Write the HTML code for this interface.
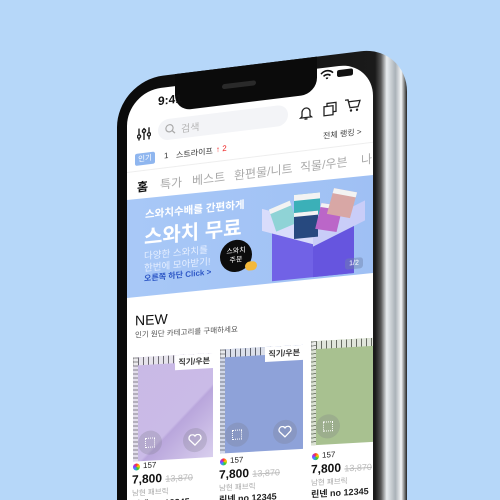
<!DOCTYPE html>
<html><head><meta charset="utf-8">
<style>
*{margin:0;padding:0;box-sizing:border-box}
html,body{width:500px;height:500px;overflow:hidden}
body{background:#b6d7f9;font-family:"Liberation Sans","Noto Sans CJK KR",sans-serif}
#wrap{position:relative;width:500px;height:500px;overflow:hidden;background:#b6d7f9}
.sec{position:absolute;left:0;top:0;width:500px;height:500px;transform-origin:127px 0}
.a{position:absolute;white-space:nowrap}
.frame{position:absolute;left:117px;top:80px;width:290px;height:640px;border-radius:46px;background:linear-gradient(90deg,#0a0a0a 0,#1a1a1a 89%,#555 91%,#e8ecef 93%,#aab2b8 96%,#f4f6f7 98%,#222 100%)}
.screen{position:absolute;left:127px;top:92px;width:246px;height:640px;border-radius:34px 34px 0 0;background:#fff}
.card{position:absolute;width:80px;height:104px;overflow:hidden}
.ruler{position:absolute;left:0;top:0;right:0;height:8px;background:repeating-linear-gradient(90deg,#555 0 1px,#eee 1px 5px);opacity:.8}
.rl{position:absolute;left:0;top:0;bottom:0;width:5px;background:repeating-linear-gradient(180deg,#666 0 1px,#eee 1px 4px);opacity:.7}
.tag{position:absolute;right:0;top:0;background:#fff;font-size:8px;font-weight:bold;padding:2px 3px;color:#333}
.ic{position:absolute;width:24px;height:24px;border-radius:12px;background:rgba(120,120,130,.25)}
.sq{position:absolute;left:7px;top:7px;width:10px;height:10px;border:1.5px dotted #fff}
</style></head><body><div id="wrap">

<div class="sec" style="transform:skewY(-7deg)">
  <div class="frame"></div>
  <div class="screen"></div>
  <div class="a" style="left:175px;top:80px;width:142px;height:37px;background:#0b0b0b;border-radius:0 0 16px 16px"></div>
  <div class="a" style="left:222px;top:96px;width:34px;height:5px;background:#2a2a2a;border-radius:3px"></div>
  <div class="a" style="left:158px;top:98px;font-size:12px;font-weight:bold;color:#111">9:41</div>
  <svg class="a" style="left:320px;top:94px" width="14" height="11" viewBox="0 0 14 11"><path d="M1 4 A8 8 0 0 1 13 4 M3.5 6.5 A5 5 0 0 1 10.5 6.5 M6 9 A2 2 0 0 1 8 9" stroke="#111" stroke-width="1.6" fill="none"/></svg>
  <div class="a" style="left:337px;top:96px;width:16px;height:7px;background:#111;border-radius:2px"></div>
  <svg class="a" style="left:137px;top:129px" width="14" height="14" viewBox="0 0 14 14"><g stroke="#222" stroke-width="1.4" fill="none"><path d="M2 1v12M7 1v12M12 1v12"/><circle cx="2" cy="9" r="1.6" fill="#fff"/><circle cx="7" cy="4" r="1.6" fill="#fff"/><circle cx="12" cy="8" r="1.6" fill="#fff"/></g></svg>
  <div class="a" style="left:158px;top:124px;width:130px;height:21px;border-radius:11px;background:#f3f4f7"></div>
  <svg class="a" style="left:165px;top:129px" width="11" height="11" viewBox="0 0 11 11"><circle cx="4.5" cy="4.5" r="3.6" stroke="#aaa" stroke-width="1.2" fill="none"/><path d="M7.2 7.2L10 10" stroke="#aaa" stroke-width="1.2"/></svg>
  <div class="a" style="left:181px;top:127px;font-size:10px;color:#b5b5b5">검색</div>
  <svg class="a" style="left:298px;top:127px" width="16" height="16" viewBox="0 0 16 16"><path d="M4 11V7a4 4 0 0 1 8 0v4l1.5 1.5h-11zM6.5 14h3" stroke="#222" stroke-width="1.3" fill="none"/></svg>
  <svg class="a" style="left:322px;top:126px" width="16" height="16" viewBox="0 0 16 16"><rect x="2" y="5" width="9" height="9" stroke="#222" stroke-width="1.3" fill="none"/><path d="M5 5V2h9v9h-3" stroke="#222" stroke-width="1.3" fill="none"/></svg>
  <svg class="a" style="left:344px;top:125px" width="17" height="16" viewBox="0 0 17 16"><path d="M1 2h3l2 8h8l2-6H5" stroke="#222" stroke-width="1.3" fill="none"/><circle cx="7" cy="13" r="1.2" fill="#222"/><circle cx="13" cy="13" r="1.2" fill="#222"/></svg>
  <div class="a" style="left:135px;top:155px;width:20px;height:12px;background:#8fb6ef;border-radius:2px;color:#fff;font-size:7.5px;text-align:center;line-height:12px">인기</div>
  <div class="a" style="left:164px;top:156px;font-size:8px;color:#333">1</div>
  <div class="a" style="left:176px;top:156px;font-size:8px;color:#333">스트라이프</div>
  <div class="a" style="left:216px;top:156px;font-size:8px;color:#e22">↑ 2</div>
  <div class="a" style="left:323px;top:155px;font-size:8px;color:#444">전체 랭킹 &gt;</div>
  <div class="a" style="left:127px;top:172px;width:246px;height:1px;background:#eee"></div>
  <div class="a" style="left:137px;top:180px;font-size:12px;font-weight:bold;color:#111">홈</div>
  <div class="a" style="left:160px;top:180px;font-size:12px;color:#aaa">특가</div>
  <div class="a" style="left:192px;top:180px;font-size:12px;color:#aaa">베스트</div>
  <div class="a" style="left:234px;top:180px;font-size:12px;color:#aaa">환편물/니트</div>
  <div class="a" style="left:300px;top:180px;font-size:12px;color:#aaa">직물/우븐</div>
  <div class="a" style="left:361px;top:180px;font-size:12px;color:#aaa">나</div>
</div>

<div class="sec" style="transform:skewY(-5.8deg)">
  <div class="a" style="left:127px;top:200px;width:246px;height:98px;background:linear-gradient(90deg,#a8c8f7,#9fc0f4)"></div>
  <div class="a" style="left:145px;top:209px;font-size:10.5px;color:#fff;font-weight:bold">스와치수배를 간편하게</div>
  <div class="a" style="left:144px;top:223px;font-size:20px;color:#fff;font-weight:bold">스와치 무료</div>
  <div class="a" style="left:144px;top:250px;font-size:9.5px;color:#e6efff">다양한 스와치를</div>
  <div class="a" style="left:144px;top:262px;font-size:9.5px;color:#e6efff">한번에 모아받기!</div>
  <div class="a" style="left:144px;top:275px;font-size:8px;color:#2d57c6;font-weight:bold">오른쪽 하단 Click &gt;</div>
  <div class="a" style="left:220px;top:251px;width:32px;height:32px;border-radius:16px;background:#0c0c0c;color:#fff;font-size:7px;text-align:center;line-height:9px;padding-top:7px">스와치<br>주문</div>
  <div class="a" style="left:245px;top:274px;width:12px;height:9px;border-radius:5px;background:#f3b83a"></div>
  <div class="a" style="left:272px;top:248px;width:82px;height:48px;background:#7162e6"></div>
  <div class="a" style="left:313px;top:248px;width:41px;height:48px;background:#6655df"></div>
  <div class="a" style="left:262px;top:232px;width:52px;height:22px;background:#d9dcfb;transform:skewY(20deg)"></div>
  <div class="a" style="left:313px;top:235px;width:52px;height:20px;background:#c9cdf8;transform:skewY(-22deg)"></div>
  <div class="a" style="left:272px;top:220px;width:22px;height:24px;background:#8fd3d6;border-top:5px solid #f3f3f3;transform:rotate(-18deg)"></div>
  <div class="a" style="left:294px;top:212px;width:26px;height:22px;background:#3bb0b8;border-top:6px solid #f3f3f3"></div>
  <div class="a" style="left:294px;top:230px;width:24px;height:26px;background:#27497f;border-top:4px solid #f3f3f3"></div>
  <div class="a" style="left:318px;top:225px;width:22px;height:26px;background:#bb66c8;border-top:4px solid #f3f3f3;transform:rotate(14deg)"></div>
  <div class="a" style="left:330px;top:212px;width:24px;height:26px;background:#d8a7a5;border-top:5px solid #f3f3f3;transform:rotate(16deg)"></div>
  <div class="a" style="left:345px;top:281px;width:18px;height:11px;background:rgba(110,130,170,.45);border-radius:3px;color:#fff;font-size:7px;text-align:center;line-height:11px">1/2</div>
</div>

<div class="sec" style="transform:skewY(-3.3deg)">
  <div class="a" style="left:135px;top:313px;font-size:14px;color:#111">NEW</div>
  <div class="a" style="left:135px;top:330px;font-size:7.5px;color:#555">인기 원단 카테고리를 구매하세요</div>
  <div class="card" style="left:133px;top:358px;background:linear-gradient(135deg,#c9b9e6 0,#cabbe7 60%,#b9a6dc 62%,#d9cfee 100%)"><div class="ruler"></div><div class="rl"></div><div class="tag">직기/우븐</div><div class="ic" style="left:5px;bottom:6px"><div class="sq"></div></div><div class="ic" style="right:6px;bottom:6px"><svg style="position:absolute;left:5px;top:6px" width="14" height="12" viewBox="0 0 14 12"><path d="M7 11L1.5 5.5A3 3 0 0 1 7 2a3 3 0 0 1 5.5 3.5z" stroke="#fff" stroke-width="1.3" fill="none"/></svg></div></div>
  <div class="card" style="left:220px;top:355px;width:83px;background:#8ea2d9"><div class="ruler"></div><div class="rl"></div><div class="tag">직기/우븐</div><div class="ic" style="left:5px;bottom:6px"><div class="sq"></div></div><div class="ic" style="right:6px;bottom:6px"><svg style="position:absolute;left:5px;top:6px" width="14" height="12" viewBox="0 0 14 12"><path d="M7 11L1.5 5.5A3 3 0 0 1 7 2a3 3 0 0 1 5.5 3.5z" stroke="#fff" stroke-width="1.3" fill="none"/></svg></div></div>
  <div class="card" style="left:311px;top:352px;width:62px;background:#a8c190"><div class="ruler"></div><div class="rl"></div><div class="ic" style="left:5px;bottom:6px"><div class="sq"></div></div></div>
  <div class="a" style="left:133px;top:464px;width:7px;height:7px;border-radius:4px;background:conic-gradient(#f33,#fc0,#3c3,#39f,#93f,#f33)"></div>
  <div class="a" style="left:143px;top:462px;font-size:8px;color:#222">157</div>
  <div class="a" style="left:132px;top:473px;font-size:12px;font-weight:bold;color:#111">7,800 <span style="font-size:9px;font-weight:normal;color:#bbb;text-decoration:line-through">13,870</span></div>
  <div class="a" style="left:132px;top:488px;font-size:7.5px;color:#aaa">남현 패브릭</div>
  <div class="a" style="left:132px;top:498px;font-size:9px;font-weight:bold;color:#222">린넨 no 12345</div>
  <div class="a" style="left:220px;top:464px;width:7px;height:7px;border-radius:4px;background:conic-gradient(#f33,#fc0,#3c3,#39f,#93f,#f33)"></div>
  <div class="a" style="left:230px;top:462px;font-size:8px;color:#222">157</div>
  <div class="a" style="left:219px;top:473px;font-size:12px;font-weight:bold;color:#111">7,800 <span style="font-size:9px;font-weight:normal;color:#bbb;text-decoration:line-through">13,870</span></div>
  <div class="a" style="left:219px;top:488px;font-size:7.5px;color:#aaa">남현 패브릭</div>
  <div class="a" style="left:219px;top:498px;font-size:9px;font-weight:bold;color:#222">린넨 no 12345</div>
  <div class="a" style="left:312px;top:464px;width:7px;height:7px;border-radius:4px;background:conic-gradient(#f33,#fc0,#3c3,#39f,#93f,#f33)"></div>
  <div class="a" style="left:322px;top:462px;font-size:8px;color:#222">157</div>
  <div class="a" style="left:311px;top:473px;font-size:12px;font-weight:bold;color:#111">7,800 <span style="font-size:9px;font-weight:normal;color:#bbb;text-decoration:line-through">13,870</span></div>
  <div class="a" style="left:311px;top:488px;font-size:7.5px;color:#aaa">남현 패브릭</div>
  <div class="a" style="left:311px;top:498px;font-size:9px;font-weight:bold;color:#222">린넨 no 12345</div>
</div>
</div></body></html>
